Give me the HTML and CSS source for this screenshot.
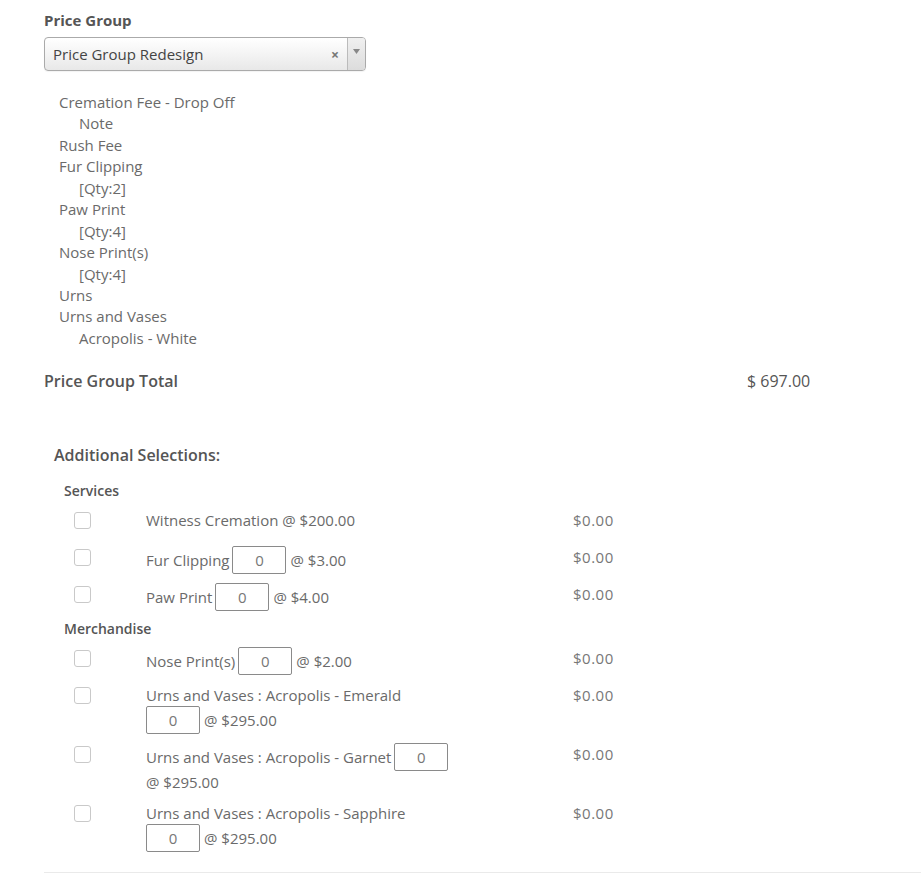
FILE: index.html
```html
<!DOCTYPE html>
<html>
<head>
<meta charset="utf-8">
<link rel="stylesheet" href="styles.css">
</head>
<body>
<div class="page">
  <div class="field-label">Price Group</div>
  <div class="select">
    <span class="select-text">Price Group Redesign</span>
    <span class="select-clear">&#215;</span>
    <span class="select-arrow"><svg width="7" height="5" viewBox="0 0 7 5"><path d="M0 0H7L3.5 5Z" fill="#888"/></svg></span>
  </div>

  <ul class="items">
    <li>Cremation Fee - Drop Off</li>
    <li class="sub">Note</li>
    <li>Rush Fee</li>
    <li>Fur Clipping</li>
    <li class="sub">[Qty:2]</li>
    <li>Paw Print</li>
    <li class="sub">[Qty:4]</li>
    <li>Nose Print(s)</li>
    <li class="sub">[Qty:4]</li>
    <li>Urns</li>
    <li>Urns and Vases</li>
    <li class="sub">Acropolis - White</li>
  </ul>

  <div class="total-row">
    <span class="total-label">Price Group Total</span>
    <span class="total-value">$ 697.00</span>
  </div>

  <h3 class="additional">Additional Selections:</h3>

  <div class="group">
    <div class="group-title">Services</div>
    <div class="sel-row">
      <span class="check"></span>
      <div class="sel-text"><span>Witness Cremation @ $200.00</span></div>
      <span class="sel-price">$0.00</span>
    </div>
    <div class="sel-row">
      <span class="check"></span>
      <div class="sel-text"><span>Fur Clipping</span><span class="qty">0</span><span>@ $3.00</span></div>
      <span class="sel-price">$0.00</span>
    </div>
    <div class="sel-row">
      <span class="check"></span>
      <div class="sel-text"><span>Paw Print</span><span class="qty">0</span><span>@ $4.00</span></div>
      <span class="sel-price">$0.00</span>
    </div>

    <div class="group-title">Merchandise</div>
    <div class="sel-row">
      <span class="check"></span>
      <div class="sel-text"><span>Nose Print(s)</span><span class="qty">0</span><span>@ $2.00</span></div>
      <span class="sel-price">$0.00</span>
    </div>
    <div class="sel-row">
      <span class="check"></span>
      <div class="sel-text"><span>Urns and Vases : Acropolis - Emerald</span><span class="qty">0</span><span>@ $295.00</span></div>
      <span class="sel-price">$0.00</span>
    </div>
    <div class="sel-row">
      <span class="check"></span>
      <div class="sel-text"><span>Urns and Vases : Acropolis - Garnet</span><span class="qty">0</span><span>@ $295.00</span></div>
      <span class="sel-price">$0.00</span>
    </div>
    <div class="sel-row">
      <span class="check"></span>
      <div class="sel-text"><span>Urns and Vases : Acropolis - Sapphire</span><span class="qty">0</span><span>@ $295.00</span></div>
      <span class="sel-price">$0.00</span>
    </div>
  </div>

  <div class="rule"></div>
</div>
</body>
</html>
```

FILE: styles.css
```css
html, body {
  margin: 0;
  padding: 0;
  background: #fff;
}
body {
  font-family: "Open Sans", "Liberation Sans", sans-serif;
  font-size: 15px;
  color: #6a6a6a;
}
.page {
  padding-left: 44px;
  padding-top: 10px;
}
.field-label {
  font-weight: 700;
  font-size: 15px;
  line-height: 20px;
  color: #555;
}
.select {
  margin-top: 7px;
  width: 322px;
  height: 34px;
  box-sizing: border-box;
  border: 1px solid #aaa;
  border-radius: 4px;
  background: linear-gradient(to bottom, #ffffff 0%, #f4f4f4 50%, #e8e8e8 100%);
  display: flex;
  align-items: center;
  box-shadow: 0 1px 1px rgba(0,0,0,0.05);
}
.select-text {
  flex: 1;
  padding-left: 8px;
  color: #444;
  font-size: 15px;
}
.select-clear {
  width: 20px;
  font-size: 14px;
  font-weight: 700;
  color: #777;
  text-align: center;
  margin-right: 2px;
}
.select-arrow {
  width: 18px;
  height: 32px;
  box-sizing: border-box;
  border-left: 1px solid #bbb;
  border-radius: 0 3px 3px 0;
  background: linear-gradient(to bottom, #f0f0f0 0%, #dcdcdc 100%);
  display: flex;
  justify-content: center;
  align-items: flex-start;
  padding-top: 11px;
}
.items {
  list-style: none;
  margin: 21px 0 0 0;
  padding: 0 0 0 15px;
  line-height: 21.43px;
}
.items .sub {
  padding-left: 20px;
}
.total-row {
  margin-top: 21px;
  display: grid;
  grid-template-columns: 703px auto;
  line-height: 22px;
  font-size: 16px;
  font-weight: 600;
  color: #555;
}
.total-value {
  font-weight: 500;
}
.additional {
  margin: 52px 0 0 0;
  padding-left: 10px;
  font-size: 16px;
  font-weight: 600;
  line-height: 22px;
  color: #555;
}
.group {
  margin-top: 16px;
  padding-left: 20px;
}
.group-title {
  font-size: 14px;
  font-weight: 600;
  line-height: 18px;
  color: #555;
  margin-bottom: 9px;
}
.sel-row {
  display: grid;
  grid-template-columns: 82px 427px auto;
  align-items: start;
  margin-bottom: 9px;
}
.check {
  margin: 3px 0 0 10px;
  width: 17px;
  height: 17px;
  box-sizing: border-box;
  border: 1px solid #c9c9c9;
  border-radius: 3px;
  background: #fff;
}
.sel-text {
  max-width: 307px;
  min-height: 28px;
  display: flex;
  flex-wrap: wrap;
  align-items: center;
  align-content: flex-start;
  column-gap: 3px;
  line-height: 22px;
}
.qty {
  width: 54px;
  height: 28px;
  box-sizing: border-box;
  border: 1px solid #8a8a8a;
  border-radius: 2px;
  text-align: center;
  line-height: 26px;
  color: #777;
  margin-right: 1px;
}
.sel-price {
  line-height: 22px;
  color: #777;
  letter-spacing: 0.5px;
}
.rule {
  margin-top: 20px;
  border-top: 1px solid #eaeaea;
}
```
